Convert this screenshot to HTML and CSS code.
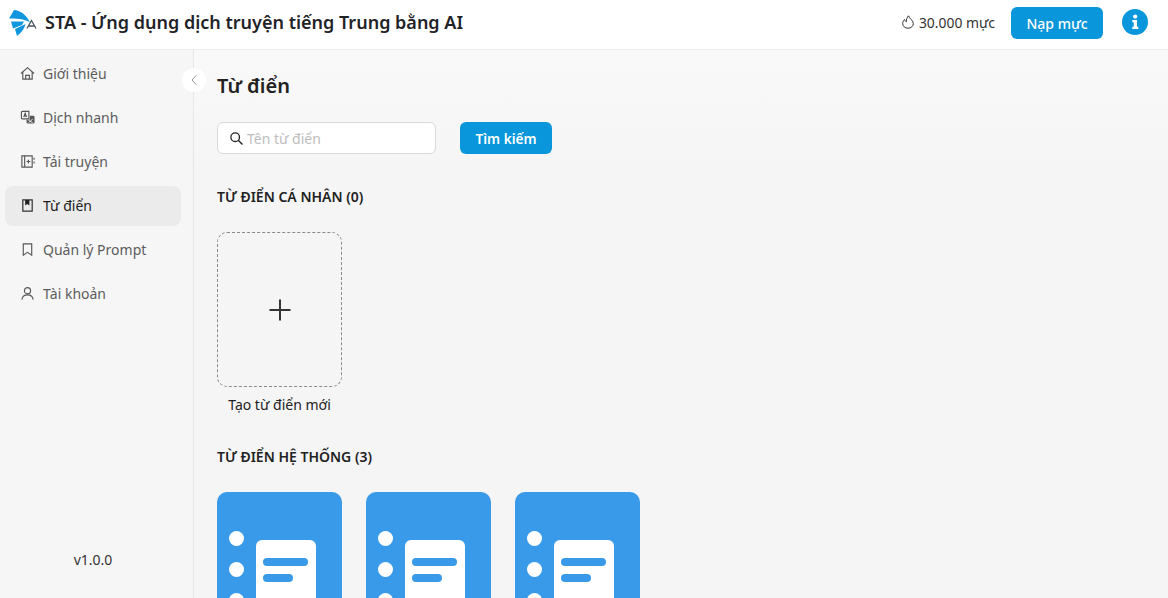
FILE: index.html
```html
<!DOCTYPE html>
<html lang="vi">
<head>
<meta charset="utf-8">
<title>STA</title>
<link rel="stylesheet" href="styles.css">
</head>
<body>
<header class="topbar">
  <div class="brand">
    <svg class="logo" width="28" height="28" viewBox="0 0 28 28">
      <path fill="#0f96dc" d="M0 9.500 L5 1 C11 1.500 17 5 21 13.500 C17 11 12 9.500 0 9.500 Z"/>
      <path fill="#0f96dc" d="M2 12.500 L15 12.500 L13 16 L4 19.500 Z"/>
      <path fill="#0f96dc" d="M6 20 L16.500 15 C15.500 20 12 24 8 27 Z"/>
      <path fill="none" stroke="#4a5560" stroke-width="1.300" d="M18 19.500 L22.500 11.500 L27 19.500 M19.500 17 H25.500"/>
    </svg>
    <span class="brand-name">STA - Ứng dụng dịch truyện tiếng Trung bằng AI</span>
  </div>
  <div class="top-actions">
    <svg class="flame" width="12" height="14" viewBox="0 0 12 14"><path fill="none" stroke="#333" stroke-width="1" d="M6.500 .8 C7 3.500 11.300 5 11.300 8.500 C11.300 11.300 9 13.200 6 13.200 C3 13.200 .7 11.300 .7 8.500 C.7 7 1.500 5.500 2.500 4.500 C3 5.800 3.500 6.300 4.300 6.800 C4.300 4.500 5 2.500 6.500 .8 Z"/></svg>
    <span class="credit">30.000 mực</span>
    <button class="btn btn-top">Nạp mực</button>
    <svg class="info" width="26" height="26" viewBox="0 0 26 26"><circle cx="13" cy="13" r="13" fill="#0a96da"/><circle cx="13.200" cy="7.600" r="2.100" fill="#fff"/><path fill="#fff" d="M10.300 11 H15 V17.700 H16.300 V20 H10.300 V17.700 H11.700 V13.300 H10.300 Z"/></svg>
  </div>
</header>
<div class="layout">
  <aside class="sidebar">
    <nav class="nav">
      <a class="nav-item">
        <svg class="nav-icon" viewBox="0 0 16 16"><path d="M1 8 L8 1.800 L15 8 M3 6.500 V14 H13 V6.500 M6 14 V10 H10 V14"/></svg>
        <span>Giới thiệu</span>
      </a>
      <a class="nav-item">
        <svg class="nav-icon" viewBox="0 0 16 16"><path d="M2.500 1.500 H9.500 V9.500 H2.500 Q1.500 9.500 1.500 8.500 V2.500 Q1.500 1.500 2.500 1.500 Z M4 7.500 L5.500 3.500 L7 7.500 M4.500 6.200 H6.500"/><path class="solid" d="M10.500 6 H14 Q15.500 6 15.500 7.500 V13 Q15.500 14.500 14 14.500 H8.500 Q7 14.500 7 13 V10.500 H10.500 Z"/><path class="cut" d="M9 11 L13.500 13.500 M13.500 9.500 L9.500 13.500"/></svg>
        <span>Dịch nhanh</span>
      </a>
      <a class="nav-item">
        <svg class="nav-icon" viewBox="0 0 16 16"><path d="M2 2 H13 V14 H2 Z M5 2 V14 M9 6 V10 M7 8 H11 M15 4 V6 M15 8 V10"/></svg>
        <span>Tải truyện</span>
      </a>
      <a class="nav-item active">
        <svg class="nav-icon dark" viewBox="0 0 16 16"><path d="M3 2 H13 V14 H3 Z"/><path class="solid-dark" d="M5.500 2 H10 V8 L7.750 6.500 L5.500 8 Z"/></svg>
        <span>Từ điển</span>
      </a>
      <a class="nav-item">
        <svg class="nav-icon" viewBox="0 0 16 16"><path d="M3.500 2 H12.500 V14 L8 11 L3.500 14 Z"/></svg>
        <span>Quản lý Prompt</span>
      </a>
      <a class="nav-item">
        <svg class="nav-icon" viewBox="0 0 16 16"><circle cx="8" cy="5" r="3.300"/><path d="M2 14.500 C2.500 11 5 9.500 8 9.500 C11 9.500 13.500 11 14 14.500"/></svg>
        <span>Tài khoản</span>
      </a>
    </nav>
    <div class="version">v1.0.0</div>
    <button class="collapse" aria-label="Thu gọn">
      <svg width="8" height="10" viewBox="0 0 8 10"><path fill="none" stroke="#9a9a9a" stroke-width="1" d="M6 .5 L2 5 L6 9.500"/></svg>
    </button>
  </aside>
  <main class="main">
    <h1 class="title">Từ điển</h1>
    <div class="search-row">
      <label class="search">
        <svg width="15" height="15" viewBox="0 0 15 15"><circle cx="6.200" cy="6.200" r="4.300" fill="none" stroke="#222" stroke-width="1.300"/><path stroke="#222" stroke-width="1.500" d="M9.500 9.500 L13.500 13.500"/></svg>
        <span class="placeholder">Tên từ điển</span>
      </label>
      <button class="btn btn-search">Tìm kiếm</button>
    </div>
    <h2 class="section">TỪ ĐIỂN CÁ NHÂN (0)</h2>
    <div class="new-wrap">
      <div class="new-card">
        <svg width="22" height="22" viewBox="0 0 22 22"><path stroke="#333" stroke-width="2" d="M11 0.500 V21.500 M0.500 11 H21.500"/></svg>
      </div>
      <div class="new-label">Tạo từ điển mới</div>
    </div>
    <h2 class="section section-system">TỪ ĐIỂN HỆ THỐNG (3)</h2>
    <div class="cards">
      <div class="dict-card"><i class="dot d1"></i><i class="dot d2"></i><i class="dot d3"></i><div class="paper"><b class="line long"></b><b class="line short"></b></div></div>
      <div class="dict-card"><i class="dot d1"></i><i class="dot d2"></i><i class="dot d3"></i><div class="paper"><b class="line long"></b><b class="line short"></b></div></div>
      <div class="dict-card"><i class="dot d1"></i><i class="dot d2"></i><i class="dot d3"></i><div class="paper"><b class="line long"></b><b class="line short"></b></div></div>
    </div>
  </main>
</div>
</body>
</html>
```
FILE: styles.css
```css
* { box-sizing: border-box; }
html, body { height: 100%; }
body {
  margin: 0;
  height: 598px;
  overflow: hidden;
  font-family: "Noto Sans", sans-serif;
  color: #1f1f1f;
  background: #f5f5f5;
  display: flex;
  flex-direction: column;
}
.topbar {
  height: 50px;
  flex: none;
  background: #fff;
  border-bottom: 1px solid #ececec;
  display: flex;
  align-items: center;
  justify-content: space-between;
  padding: 0 20px 3px 9px;
}
.brand { display: flex; align-items: center; gap: 8px; }
.logo { display: block; }
.brand-name { font-size: 18px; font-weight: 600; line-height: 24px; color: #1f2328; margin-bottom: 2px; }
.top-actions { display: flex; align-items: center; }
.flame { margin-right: 5px; margin-bottom: 2px; }
.credit { font-size: 13.900px; color: #333; margin-right: 16px; margin-bottom: 2px; }
.btn {
  border: 0;
  background: #0a96da;
  color: #fff;
  font: 500 14px "Noto Sans", sans-serif;
  border-radius: 6px;
  padding: 0;
}
.btn-top { width: 92px; height: 32px; margin-right: 19px; }
.info { display: block; margin-bottom: 2px; }
.layout { flex: 1; display: flex; min-height: 0; }
.sidebar {
  position: relative;
  width: 194px;
  flex: none;
  background: #f6f6f6;
  border-right: 1px solid #e6e6e6;
  padding: 4px 12px 28px 5px;
  display: flex;
  flex-direction: column;
  justify-content: space-between;
}
.nav { display: flex; flex-direction: column; gap: 4px; }
.nav-item {
  height: 40px;
  display: flex;
  align-items: center;
  gap: 8px;
  padding: 0 0 2px 15px;
  border-radius: 8px;
  font-size: 14px;
  color: #5c5c5c;
}
.nav-item.active { background: #ebebeb; color: #222; }
.nav-icon {
  width: 15px;
  height: 15px;
  fill: none;
  stroke: #555;
  stroke-width: 1.200;
  flex: none;
}
.nav-icon .solid { fill: #555; stroke: none; }
.nav-icon .cut { stroke: #f6f6f6; stroke-width: 1; }
.nav-icon.dark { stroke: #333; stroke-width: 1.300; }
.nav-icon .solid-dark { fill: #222; stroke: none; }
.version { text-align: center; font-size: 14px; color: #333; line-height: 20px; }
.collapse {
  position: absolute;
  top: 18px;
  right: -13px;
  width: 24px;
  height: 24px;
  padding: 0;
  border: 0;
  border-radius: 50%;
  background: #fff;
  display: flex;
  align-items: center;
  justify-content: center;
}
.main {
  flex: 1;
  min-width: 0;
  padding: 22px 23px 0;
  background: linear-gradient(#f9f9f9, #f5f5f5 130px);
  overflow: hidden;
}
.title { margin: 0 0 22px; font-size: 20px; font-weight: 600; line-height: 28px; color: #222; }
.search-row { display: flex; gap: 24px; }
.search {
  width: 219px;
  height: 32px;
  background: #fff;
  border: 1px solid #d9d9d9;
  border-radius: 6px;
  display: flex;
  align-items: center;
  gap: 3px;
  padding-left: 11px;
}
.placeholder { font-size: 14px; color: #bdbdbd; }
.btn-search { width: 92px; height: 32px; font-size: 13.600px; font-weight: 600; }
.section { margin: 0; font-size: 14px; font-weight: 600; line-height: 20px; color: #222; padding-top: 33px; }
.new-wrap { width: 125px; margin-top: 25px; }
.new-card {
  height: 155px;
  border: 1px dashed #8a8a8a;
  border-radius: 10px;
  display: flex;
  align-items: center;
  justify-content: center;
}
.new-label { text-align: center; font-size: 14px; line-height: 20px; margin-top: 8px; color: #222; }
.section-system { padding-top: 32px; }
.cards { display: flex; gap: 24px; margin-top: 25px; }
.dict-card {
  position: relative;
  width: 125px;
  height: 155px;
  flex: none;
  background: #389ae8;
  border-radius: 10px;
}
.dot { position: absolute; left: 12px; width: 15px; height: 15px; border-radius: 50%; background: #fff; }
.d1 { top: 39px; }
.d2 { top: 70px; }
.d3 { top: 101px; }
.paper {
  position: absolute;
  left: 39px;
  top: 48px;
  width: 60px;
  height: 80px;
  background: #fff;
  border-radius: 6px;
  padding: 18px 7px 0;
  display: flex;
  flex-direction: column;
  gap: 8px;
}
.line { display: block; height: 8px; border-radius: 4px; background: #389ae8; }
.long { width: 45px; }
.short { width: 30px; }
```
